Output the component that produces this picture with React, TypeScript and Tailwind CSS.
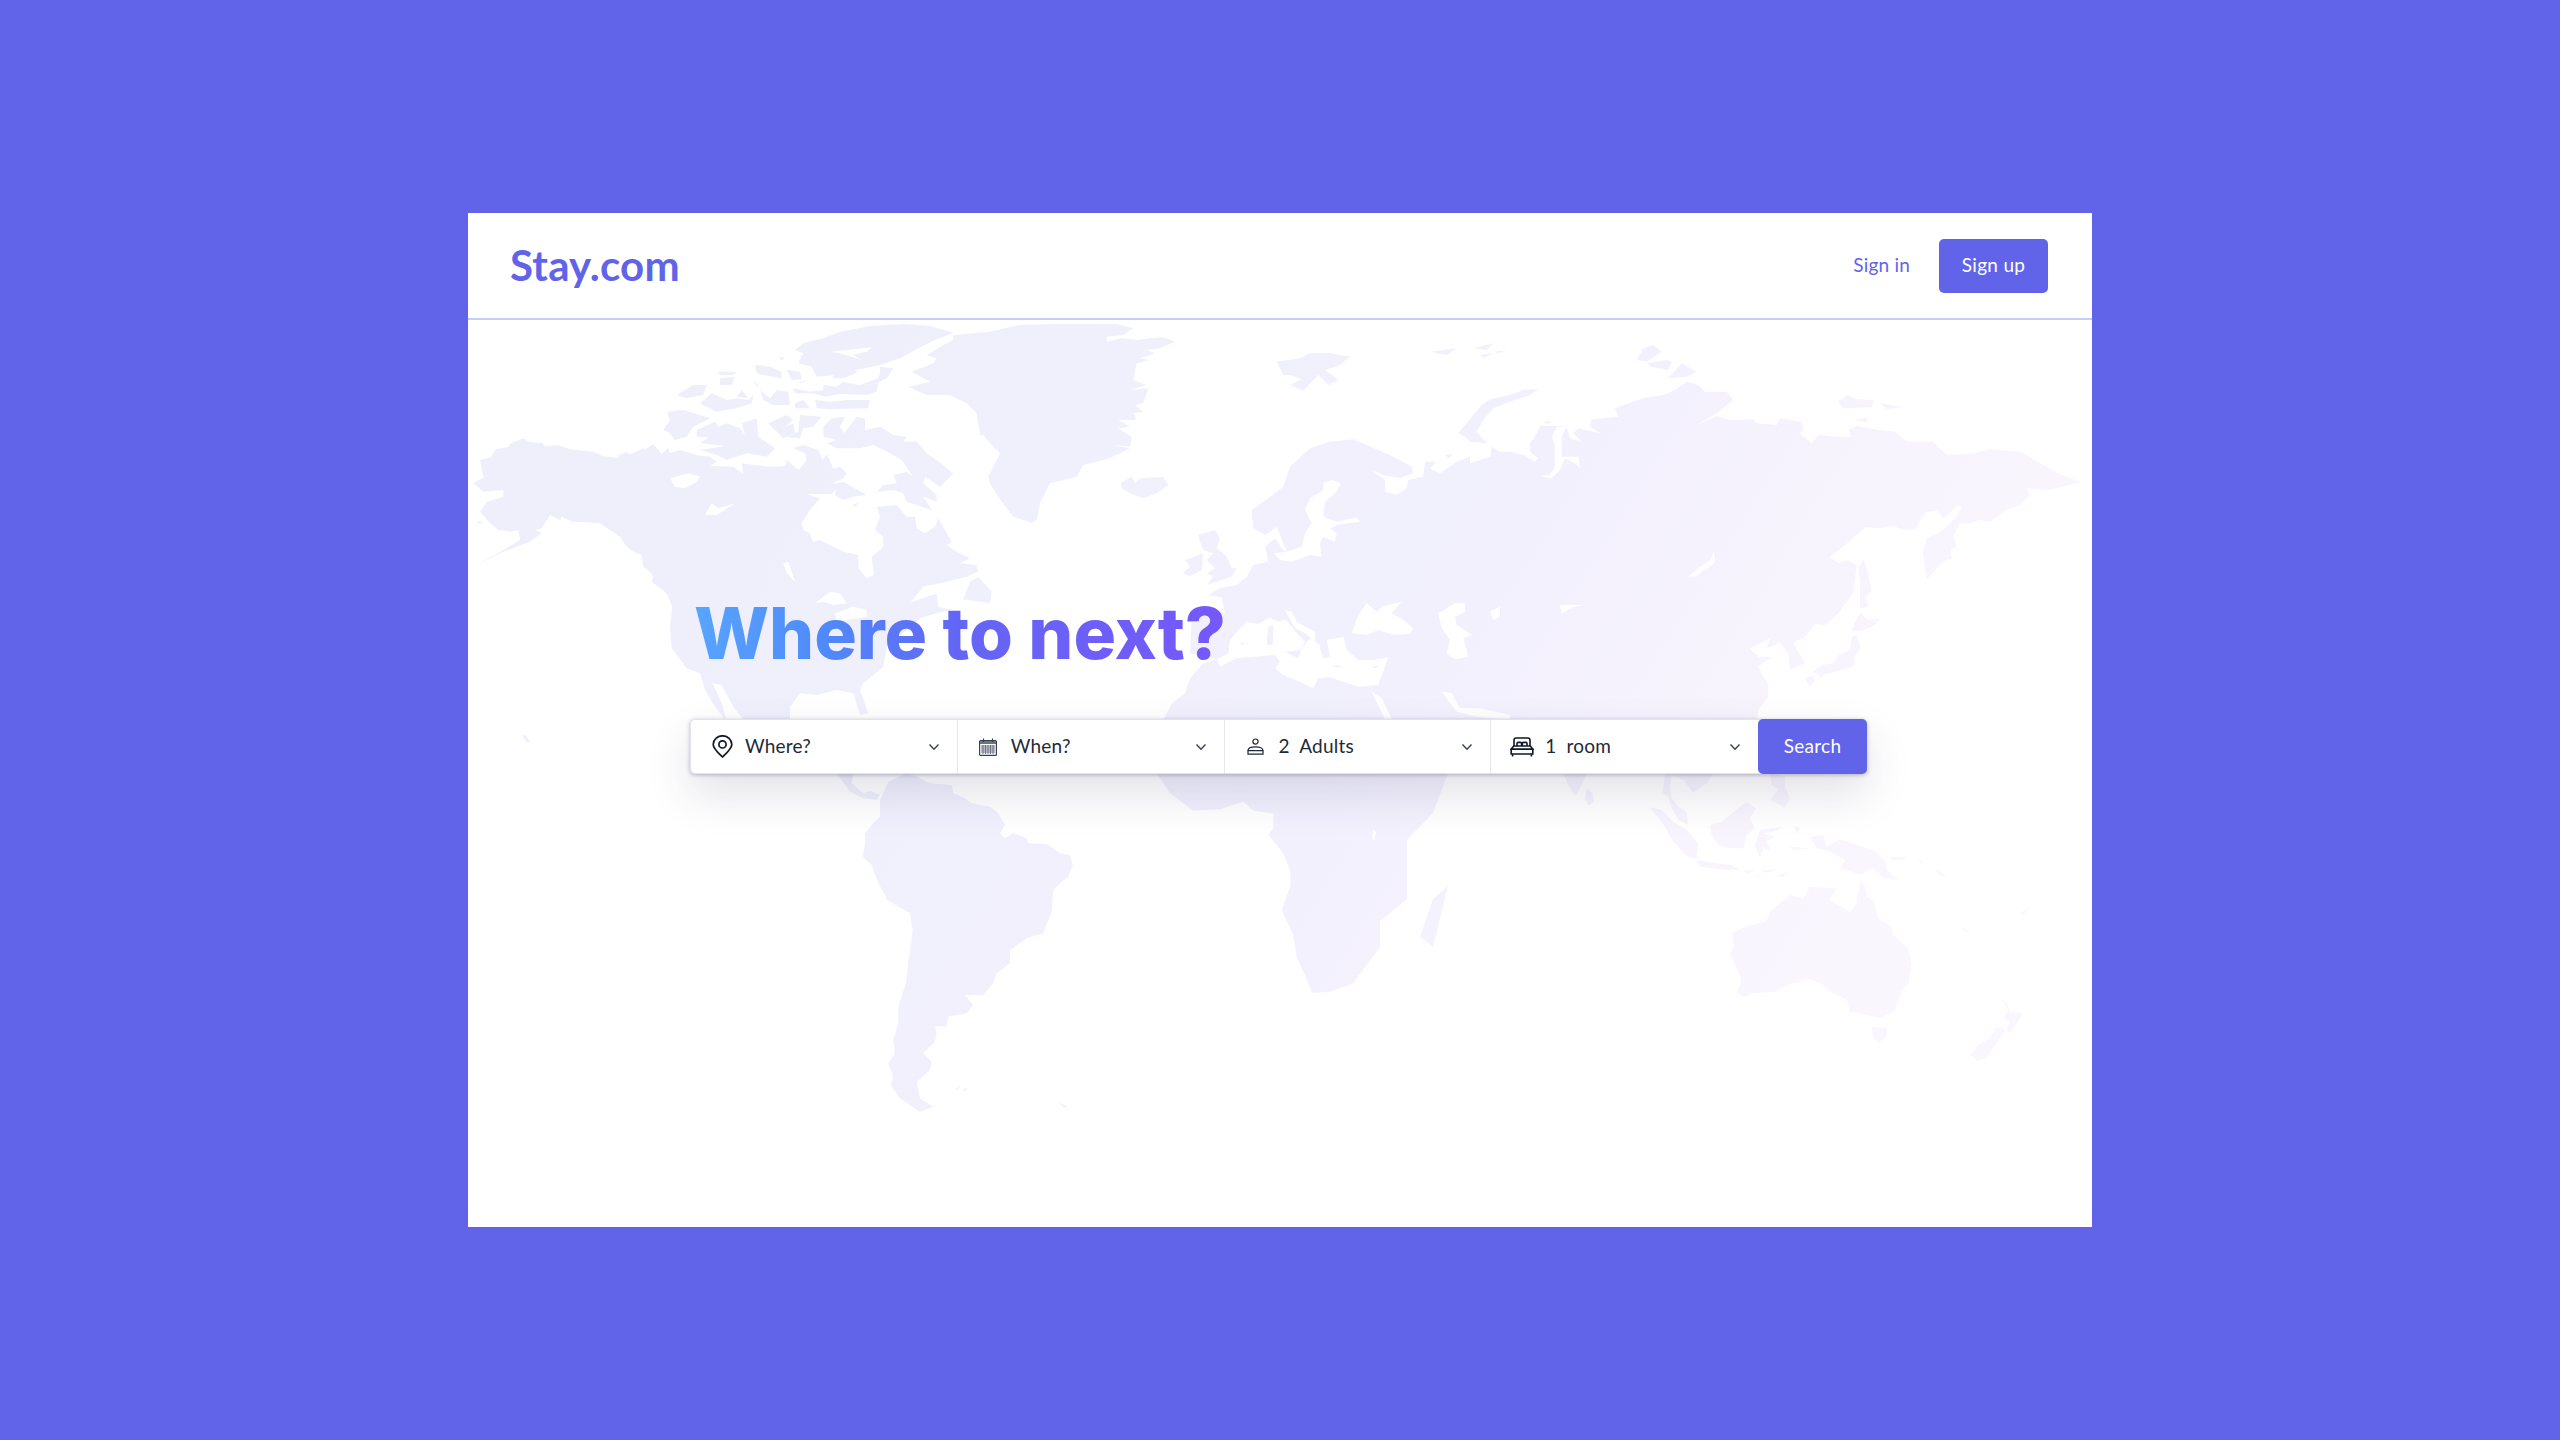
import React from "react";

const pts = (ox: number, oy: number, s: string) =>
  s.trim().split(/\s+/).map((p) => {
    const [x, y] = p.split(",").map(Number);
    return `${(ox + x / 3).toFixed(1)},${(oy + y / 3).toFixed(1)}`;
  }).join(" ");

const Z6: [number, number] = [470, 320];
const Z7: [number, number] = [990, 320];
const Z8: [number, number] = [1510, 320];
const Z9: [number, number] = [820, 770];
const Z10: [number, number] = [1540, 770];

type Shape = [[number, number], string];

const land: Shape[] = [
  // North America
  [Z6, "10,490 45,470 65,462 105,472 70,482 40,470 30,420 62,412 78,388 115,380 122,370 160,355 178,366 215,368 225,378 265,376 300,388 370,395 400,408 445,415 445,405 470,397 482,402 525,383 520,392 550,372 575,402 595,385 600,400 630,390 680,405 720,410 740,425 720,438 790,440 820,462 815,430 855,435 900,440 945,438 950,420 985,450 1010,420 1005,400 970,385 1000,375 1045,390 1058,420 1070,402 1090,445 1110,440 1130,460 1120,475 1085,490 1060,480 1110,495 1085,522 1010,522 1050,535 1020,570 995,610 1000,630 1020,640 1028,665 1050,660 1090,680 1120,695 1165,705 1165,745 1190,775 1212,765 1205,710 1240,680 1240,650 1215,630 1230,590 1220,560 1280,555 1310,590 1335,590 1340,625 1365,640 1395,620 1405,595 1445,665 1430,675 1460,695 1500,715 1470,730 1520,735 1525,755 1490,770 1410,790 1360,800 1320,848 1400,820 1405,860 1445,870 1400,880 1350,895 1250,980 1240,1040 1180,1090 1170,1110 1195,1180 1170,1185 1150,1120 1100,1110 1040,1125 990,1120 960,1160 960,1205 825,1205 790,1160 755,1095 728,1090 755,1150 770,1205 735,1160 705,1110 690,1060 650,1045 605,985 600,920 607,860 590,820 545,785 550,765 520,740 515,705 490,695 470,680 450,650 390,610 310,605 275,590 270,600 240,585 215,625 195,630 215,640 180,665 140,680 90,700 20,735 100,690 150,660 145,630 120,635 85,630 60,610 30,575 50,545 100,530 100,510 40,515"],
  [Z6, "1500,785 1525,770 1565,815 1560,850 1480,838"],
  [Z6, "580,330 600,300 590,275 640,270 720,295 670,320 650,350 615,360 600,340"],
  [Z6, "680,330 735,305 745,320 770,310 810,325 825,345 815,310 860,295 865,350 915,385 890,410 830,400 770,420 740,405 690,390 765,378 690,370 715,352 680,350"],
  [Z6, "895,310 950,285 970,300 945,320 970,310 975,340 940,355 910,325"],
  [Z6, "990,285 1055,290 1030,320 1000,325 990,355 950,352 985,335"],
  [Z6, "1060,320 1085,295 1125,290 1110,320 1130,350 1115,350 1160,290 1185,295 1185,330 1230,320 1270,345 1310,350 1300,365 1340,365 1370,400 1420,435 1450,462 1410,500 1365,470 1360,490 1400,525 1400,545 1360,530 1385,570 1310,545 1300,520 1270,510 1220,515 1240,495 1280,490 1270,465 1310,455 1330,470 1295,420 1260,400 1210,375 1170,385 1100,385 1070,370 1100,360 1060,350"],
  [Z6, "1100,490 1120,485 1190,525 1150,530 1120,540 1095,525"],
  [Z6, "1145,555 1170,545 1155,560"],
  [Z6, "1000,70 1060,55 1110,35 1200,18 1300,12 1380,18 1450,38 1390,62 1345,85 1290,115 1230,135 1160,150 1100,165 1040,170 1025,140 985,130 1000,100 975,90"],
  [Z6, "1090,160 1130,145 1165,155 1120,175 1090,175"],
  [Z6, "970,205 1020,215 1060,210 1060,195 1100,200 1120,185 1140,190 1165,195 1225,190 1220,215 1190,225 1110,222 1065,230 1030,220 975,220"],
  [Z6, "1035,240 1080,245 1130,240 1200,240 1195,265 1080,268 1040,265"],
  [Z6, "1230,140 1270,145 1250,175 1220,190 1170,195 1225,175 1230,160"],
  [Z6, "620,225 670,195 710,195 700,225 650,235"],
  [Z6, "725,220 770,240 800,235 835,240 850,225 845,250 800,265 740,275 710,260 690,250"],
  [Z6, "815,210 835,235 800,230"],
  [Z6, "870,210 900,235 920,210 955,215 960,255 910,255 880,240"],
  [Z6, "855,135 900,140 935,155 935,175 880,165 860,160"],
  [Z6, "950,150 990,155 995,178 965,180"],
  [Z6, "750,175 795,170 785,195 750,195"],
  [Z6, "745,155 800,155 790,165 750,165"],
  [Z6, "975,250 1000,240 1020,265 975,265"],
  [Z6, "850,180 865,195 860,200"],
  [Z6, "985,185 1015,182 990,190"],
  [Z6, "925,110 945,115 935,122"],
  [Z6, "18,605 40,605 30,613"],
  // Greenland
  [Z7, "-110,45 0,35 85,15 200,12 380,12 430,25 400,45 280,58 350,50 350,65 395,55 445,60 480,55 520,52 555,65 510,85 470,90 495,100 450,115 480,120 440,130 430,180 470,195 420,210 475,205 460,250 435,255 460,275 430,280 440,300 385,300 420,320 385,325 425,350 420,380 370,375 420,385 360,415 280,435 260,470 180,490 150,550 140,600 125,608 70,590 35,545 15,515 0,490 -5,470 30,400 0,370 -20,345 -30,345 -40,280 -70,250 -120,225 -190,225 -245,200 -220,195 -180,185 -235,155 -170,130 -160,115 -190,105 -140,75 -110,60"],
  [Z7, "392,488 425,470 435,490 450,475 520,470 535,495 500,520 460,535 420,520 395,505"],
  [Z7, "860,125 930,115 960,100 1020,100 1080,110 1050,135 1005,150 1045,180 1015,195 985,165 940,212 900,195 935,178 900,165 880,165"],
  [Z7, "1325,95 1400,85 1370,105 1340,100"],
  [Z7, "1450,85 1510,70 1490,90"],
  [Z7, "1470,105 1510,100 1480,115"],
  [Z7, "1515,95 1555,90 1520,100"],
  [Z7, "625,645 675,630 690,655 680,685 710,710 725,745 740,745 725,770 650,795 670,770 650,760 675,745 650,720 670,700 640,690 630,665"],
  [Z7, "585,720 640,700 635,750 600,768 578,760 600,740"],
  [Z7, "1405,340 1430,310 1450,285 1475,255 1500,238 1560,225 1600,210 1645,208 1620,225 1560,245 1510,265 1480,300 1460,335 1490,370 1440,365 1425,350"],
  [Z7, "1365,405 1390,402 1375,415"],
  // Eurasia + north Africa
  [Z7, "515,1210 545,1150 585,1120 600,1075 640,1030 680,1018 650,1012 600,1000 605,900 620,880 690,872 705,880 700,855 695,832 655,825 690,805 740,795 770,770 790,735 835,725 825,680 855,655 880,690 890,695 860,620 825,645 790,625 785,570 820,545 880,500 900,440 960,385 1020,365 1090,358 1130,375 1200,405 1265,440 1268,460 1230,475 1180,465 1145,450 1185,480 1185,515 1220,525 1250,505 1255,480 1300,470 1305,425 1340,425 1320,445 1350,460 1400,425 1440,410 1440,430 1500,410 1505,380 1530,395 1560,395 1600,405 1635,425 1645,415 1620,395 1620,370 1640,340 1650,318 1700,318 1730,320 1740,355 1775,365 1750,340 1765,325 1830,340 1800,320 1805,298 1885,290 1875,265 1960,235 2020,225 2055,210 2090,185 2125,195 2145,215 2210,215 2230,240 2180,280 2120,315 2180,288 2220,300 2290,298 2300,310 2360,315 2370,295 2435,305 2440,330 2430,340 2465,370 2485,345 2560,352 2585,350 2575,330 2600,318 2665,330 2715,335 2750,365 2830,365 2860,395 2875,405 2950,400 3000,388 3090,395 3120,410 3200,459 3276,486 3177,510 3110,505 3120,525 3090,555 3050,570 3000,605 2970,600 2940,610 2910,610 2890,650 2900,680 2880,690 2885,715 2850,730 2840,745 2810,780 2798,700 2810,655 2845,640 2900,590 2915,560 2900,555 2880,580 2860,595 2840,572 2810,575 2785,610 2780,628 2740,630 2710,618 2670,625 2625,622 2590,655 2560,680 2520,710 2545,730 2570,720 2600,735 2590,820 2545,880 2505,915 2475,912 2445,950 2410,970 2445,1030 2400,1050 2395,1000 2370,968 2330,985 2340,955 2280,985 2305,1010 2345,1010 2305,1040 2335,1095 2335,1130 2305,1170 2300,1210"],
  // Africa below the bar
  [Z9, "1010,10 1884,10 1839,129 1761,210 1761,387 1680,453 1680,531 1600,640 1530,665 1476,669 1465,640 1430,560 1420,495 1385,420 1412,345 1410,300 1390,250 1345,195 1360,175 1360,130 1300,122 1270,95 1200,118 1120,122 1050,70"],
  [Z9, "1884,348 1839,531 1800,500 1839,387"],
  // Central + South America
  [Z9, "50,10 100,10 95,40 130,70 150,62 180,75 170,90 130,85 90,65"],
  [Z9, "205,35 260,10 290,20 330,40 395,45 400,70 435,85 455,100 510,110 535,130 555,165 540,190 555,205 580,190 620,205 625,220 680,222 720,250 750,255 758,285 745,320 725,335 700,360 695,425 670,490 620,505 570,540 570,580 530,610 520,640 490,675 435,675 460,705 440,730 385,740 380,770 345,768 350,790 345,815 310,850 335,875 330,900 290,935 300,985 340,1010 300,1025 240,985 212,945 220,920 205,880 225,850 220,810 235,760 235,710 258,640 265,580 278,480 270,430 200,390 195,375 175,340 155,285 128,260 135,225 135,190 155,165 180,140 180,90"],
  [Z9, "405,960 420,945 415,958"],
  [Z9, "425,962 442,950 435,962"],
  [Z9, "715,998 740,1008 735,1015"],
  // Hawaii
  [[522, 734], "0,0 10,4 24,24 16,26 6,12"],
  // Asia below the bar and Oceania
  [Z10, "70,10 140,10 120,55 105,78 85,45"],
  [Z10, "140,55 158,70 162,95 145,107 135,85"],
  [Z10, "375,10 520,10 500,40 460,68 430,30 395,15 390,45 395,85 415,110 440,125 445,165 415,150 395,115 385,80 368,68"],
  [Z10, "330,112 365,120 400,155 440,180 475,220 470,265 445,262 400,215 375,170"],
  [Z10, "510,165 545,155 580,125 620,95 648,115 630,145 645,175 620,195 610,235 570,235 535,225 515,195"],
  [Z10, "470,270 520,278 575,285 600,300 540,298 480,290"],
  [Z10, "660,180 730,170 700,185 670,190 705,200 680,215 695,245 670,235 660,265 645,225"],
  [Z10, "610,300 645,302 620,312"],
  [Z10, "660,300 715,300 680,308"],
  [Z10, "710,320 755,300 730,320"],
  [Z10, "645,315 670,325 650,322"],
  [Z10, "690,10 735,20 735,50 750,85 735,112 690,90 715,60 695,45"],
  [Z10, "810,200 850,195 860,230 900,208 1000,240 1035,270 1040,300 1075,330 1030,325 1000,295 960,315 900,295 915,270 870,245 830,235"],
  [Z10, "760,165 780,175 770,190"],
  [Z10, "745,230 810,235 760,240"],
  [Z10, "1045,262 1095,260 1110,245 1090,270 1060,272"],
  [Z10, "1135,265 1150,280 1140,278"],
  [Z10, "1185,295 1220,320 1200,318"],
  [Z10, "575,490 630,465 675,455 695,420 750,375 790,385 810,350 890,355 870,390 930,425 950,400 960,335 975,345 980,380 1000,390 1015,445 1055,470 1060,495 1105,535 1115,580 1105,640 1085,660 1065,720 1020,745 990,738 930,725 920,690 880,670 850,645 810,628 740,645 705,665 640,670 610,682 590,665 605,630 570,550 582,530"],
  [Z10, "995,770 1040,775 1040,800 1018,820 1000,805"],
  [Z10, "1380,680 1400,700 1410,725 1450,730 1430,760 1410,790 1400,780 1410,755 1390,745 1405,720"],
  [Z10, "1370,772 1395,780 1370,820 1340,865 1310,872 1290,855 1320,820 1350,805"],
  [Z10, "1260,468 1295,490 1270,482"],
  [Z10, "1440,430 1470,410 1452,435"],
];

const water: Shape[] = [
  [Z6, "1230,420 1262,428 1258,450 1232,450"],
  [Z6, "600,475 655,460 690,470 680,485 645,505 615,500"],
  [Z6, "705,585 725,550 745,565 795,550 740,585"],
  [Z6, "940,730 955,725 975,785 950,760"],
  [Z6, "1035,850 1080,815 1110,820 1130,850 1090,855 1060,845"],
  [Z6, "1095,880 1150,860 1190,870 1190,890 1130,900 1100,900"],
  [Z6, "1080,95 1205,82 1190,95 1150,105 1175,120 1110,100"],
  [Z7, "890,695 935,680 945,640 965,610 945,570 960,535 1000,510 1000,490 1025,480 1052,490 1040,515 1005,545 1000,590 1040,605 1100,592 1110,605 1040,615 1020,625 1040,640 1035,665 1000,650 990,670 995,710 960,705 905,725 870,720 850,700"],
  [Z7, "1085,940 1105,885 1130,850 1160,875 1175,860 1235,845 1205,880 1240,900 1270,925 1260,942 1210,945 1165,930 1130,945"],
  [Z7, "1345,880 1395,850 1425,850 1425,875 1395,890 1400,915 1445,945 1420,955 1435,1010 1395,1018 1370,1000 1380,960 1355,925"],
  [Z7, "1500,875 1530,860 1530,890 1510,900"],
  [Z7, "680,1018 715,1000 720,960 750,925 770,905 805,912 840,892 862,905 888,900 925,945 945,965 930,990 890,995 925,1015 935,985 960,955 990,975 990,985 1000,1015 1020,1010 1010,960 1060,950 1070,990 1105,1020 1150,1020 1195,1012 1165,1095 1105,1100 1060,1085 1020,1072 985,1075 970,1105 930,1085 880,1065 855,1045 870,1025 855,1005 740,1015 690,1040"],
  [Z7, "885,870 905,875 920,905 975,935 975,965 945,940 915,925"],
  [Z7, "1145,1115 1175,1135 1212,1210 1190,1210"],
  [Z7, "1355,1115 1385,1120 1410,1165 1470,1165 1560,1185 1560,1200 1460,1190 1400,1175"],
  [Z8, "140,320 170,320 155,350 155,410 205,410 210,445 195,430 165,415 150,450 125,475 90,468 120,465 135,440 135,375 125,350"],
  [Z8, "535,770 565,745 600,720 612,695 615,725 600,740 570,760 560,770"],
  [Z8, "150,855 220,855 190,862 155,880"],
  [Z9, "1660,180 1668,186 1662,215 1656,200"],
];

const islandsOnTop: Shape[] = [
  [Z7, "835,920 850,915 848,975 830,975"],
  [Z7, "885,995 925,995 915,1010"],
  [Z7, "1025,1035 1060,1038 1040,1042"],
  [Z7, "1145,1040 1170,1035 1155,1045"],
  [Z7, "750,968 765,968 755,975"],
  [Z8, "1045,740 1060,720 1070,745 1085,815 1065,830 1075,860 1050,865 1050,790"],
  [Z8, "1050,880 1075,900 1110,895 1095,915 1065,930 1025,935 1030,915"],
  [Z8, "1025,950 1040,945 1052,985 1035,1010 1030,1040 990,1050 960,1060 905,1060 935,1035 970,1030 985,1005 1020,990"],
  [Z8, "885,1075 910,1065 915,1080 900,1100"],
  [Z8, "925,1060 950,1055 930,1075"],
  [Z8, "380,120 400,85 430,75 455,95 440,105 410,125"],
  [Z8, "410,130 470,120 485,125 475,150 425,140"],
  [Z8, "475,175 515,130 560,155 530,170"],
  [Z8, "985,245 1010,225 1040,238 1090,240 1085,262 1000,265"],
  [Z8, "1110,250 1175,260 1130,268"],
  [Z8, "1030,300 1070,295 1075,307"],
  [Z8, "100,305 125,302 115,312"],
];

function WorldMap() {
  return (
    <svg className="absolute inset-0 h-full w-full" viewBox="468 320 1624 907" aria-hidden="true">
      <defs>
        <linearGradient id="landFill" gradientUnits="userSpaceOnUse" x1="800" y1="450" x2="1750" y2="1050">
          <stop offset="0" stopColor="#efeffc" />
          <stop offset="0.55" stopColor="#f2f0fd" />
          <stop offset="1" stopColor="#faf6fe" />
        </linearGradient>
      </defs>
      {land.map(([o, s], i) => (
        <polygon key={i} points={pts(o[0], o[1], s)} fill="url(#landFill)" />
      ))}
      {water.map(([o, s], i) => (
        <polygon key={i} points={pts(o[0], o[1], s)} fill="#ffffff" />
      ))}
      {islandsOnTop.map(([o, s], i) => (
        <polygon key={i} points={pts(o[0], o[1], s)} fill="url(#landFill)" />
      ))}
    </svg>
  );
}

const Chevron = () => (
  <svg width="12" height="8" viewBox="0 0 12 8" fill="none" stroke="#374151" strokeWidth="1.4" className="shrink-0">
    <path d="M1.5 1.5 6 6.2l4.5-4.7" />
  </svg>
);

const PinIcon = () => (
  <svg width="21" height="23" viewBox="0 0 21 23" fill="none" stroke="#111827" strokeWidth="1.7">
    <path d="M10.5 22C7 18.5 1.2 13.6 1.2 9.4a9.3 8.6 0 0 1 18.6 0c0 4.2-5.8 9.1-9.3 12.6Z" />
    <circle cx="10.5" cy="9.4" r="3.6" />
  </svg>
);

const CalendarIcon = () => (
  <svg width="18" height="18" viewBox="0 0 18 18" fill="none">
    <rect x="0.6" y="2.6" width="16.8" height="14.8" rx="1" stroke="#374151" strokeWidth="1.2" />
    <rect x="1" y="3" width="16" height="3" fill="#6b7280" />
    <path d="M4.5 0.5v3.5M13.5 0.5v3.5" stroke="#374151" strokeWidth="1.2" />
    <path d="M2 8h14M2 10h14M2 12h14M2 14h14M4 7v9M6.5 7v9M9 7v9M11.5 7v9M14 7v9" stroke="#6b7280" strokeWidth="1" />
  </svg>
);

const PersonIcon = () => (
  <svg width="17" height="17" viewBox="0 0 17 17" fill="none" stroke="#1f2937" strokeWidth="1.2">
    <circle cx="8.5" cy="3.6" r="2.6" />
    <path d="M1 12.6c0-2.4 3.3-3.8 7.5-3.8s7.5 1.4 7.5 3.8" />
    <path d="M1 12.6h15v3.6H1Z" />
  </svg>
);

const BedIcon = () => (
  <svg width="24" height="20" viewBox="0 0 24 20" fill="none" stroke="#111827" strokeWidth="1.6">
    <path d="M4 9V3.2C4 1.8 5 1 6.2 1h11.6C19 1 20 1.8 20 3.2V9" />
    <path d="M7 9V6.6c0-.8.6-1.2 1.2-1.2h2.2c.7 0 1.2.4 1.2 1.2V9M12.4 9V6.6c0-.8.5-1.2 1.2-1.2h2.2c.7 0 1.2.4 1.2 1.2V9" />
    <path d="M3.6 9h16.8l2.4 3.2H1.2L3.6 9Z" />
    <path d="M1.2 12.2h21.6V17H1.2ZM2.6 17v2.6M21.4 17v2.6" />
  </svg>
);

function Segment({ icon, label, pl, iconW, last }: { icon: React.ReactNode; label: React.ReactNode; pl: string; iconW: string; last?: boolean }) {
  return (
    <div className={`flex h-full w-[267px] items-center pr-[17px] ${pl} ${last ? "" : "border-r border-[#e5e7eb]"}`}>
      <span className={`flex shrink-0 items-center ${iconW}`}>{icon}</span>
      <span className="flex-1 text-[19px] tracking-[0.2px] text-[#1f2937]">{label}</span>
      <Chevron />
    </div>
  );
}

export default function App() {
  return (
    <div
      className="flex min-h-screen items-center justify-center bg-[#6164e9]"
      style={{ fontFamily: '"Lato", "Open Sans", "Noto Sans", sans-serif' }}
    >
      <div className="flex h-[1014px] w-[1624px] flex-col bg-white">
        <header className="flex h-[107px] shrink-0 items-center justify-between border-b-2 border-[#c7cbfb] pl-[42px] pr-[44px]">
          <div className="-mt-[2px] text-[42px] font-bold leading-none tracking-[0.2px] text-[#6164e9]">Stay.com</div>
          <nav className="flex items-center gap-[29px]">
            <a className="text-[19px] tracking-[0.2px] text-[#6164e9]">Sign in</a>
            <button className="h-[54px] w-[109px] rounded-[5px] bg-[#6164e9] text-[19px] tracking-[0.3px] text-white">Sign up</button>
          </nav>
        </header>
        <main className="relative flex-1 overflow-hidden">
          <WorldMap />
          <div className="relative pl-[222px] pt-[278px]">
            <h1 className="mb-[49px] block h-[72px] w-fit bg-[linear-gradient(95deg,#58a6ff_0%,#4f8af8_25%,#6366f5_50%,#7757fb_100%)] bg-clip-text pl-[4px] font-['Inter'] text-[71px] font-extrabold leading-none tracking-[-0.05px] text-transparent">
              Where to next?
            </h1>
            <div className="flex h-[55px] w-[1177px] rounded-[5px] border border-[#e2e3ec] bg-white shadow-[0_1px_4px_rgba(30,30,90,0.3),0_20px_45px_rgba(50,50,93,0.14)]">
              <Segment icon={<PinIcon />} label="Where?" pl="pl-[21px]" iconW="w-[33px]" />
              <Segment icon={<CalendarIcon />} label="When?" pl="pl-[21px]" iconW="w-[32px]" />
              <Segment icon={<PersonIcon />} label="2&nbsp; Adults" pl="pl-[22px]" iconW="w-[32px]" />
              <Segment icon={<BedIcon />} label="1&nbsp; room" pl="pl-[19px]" iconW="w-[35px]" last />
              <button className="-my-px -mr-px h-[55px] w-[109px] shrink-0 rounded-[5px] bg-[#6164e9] text-[19px] tracking-[0.3px] text-white">Search</button>
            </div>
          </div>
        </main>
      </div>
    </div>
  );
}
